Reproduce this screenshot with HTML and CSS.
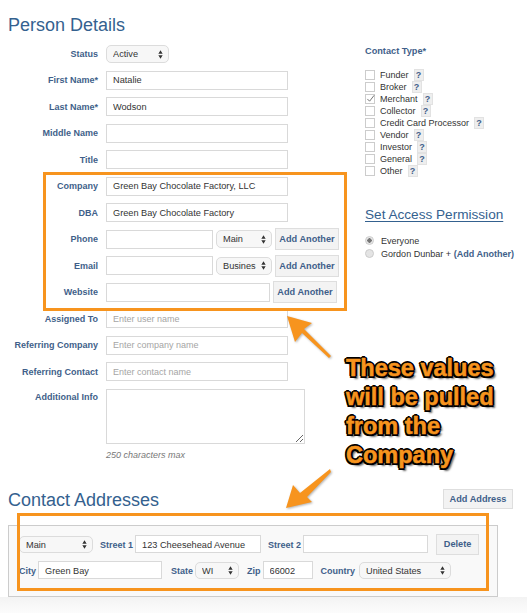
FILE: index.html
```html
<!DOCTYPE html>
<html lang="en">
<head>
<meta charset="utf-8">
<title>Person Details</title>
<link rel="stylesheet" href="styles.css">
</head>
<body>
<div class="page">
  <div class="top">
    <section class="left">
      <h1 class="title">Person Details</h1>
      <div class="row"><label class="lbl">Status</label><div class="sel w-status"><span class="sel-text">Active</span><svg class="updown" viewBox="0 0 6 10"><path d="M3 0l2.6 4H.4zM3 10l2.6-4H.4z"/></svg></div></div>
      <div class="row"><label class="lbl">First Name*</label><input class="inp w-full" value="Natalie"></div>
      <div class="row"><label class="lbl">Last Name*</label><input class="inp w-full" value="Wodson"></div>
      <div class="row"><label class="lbl">Middle Name</label><input class="inp w-full"></div>
      <div class="row"><label class="lbl">Title</label><input class="inp w-full"></div>
      <div class="row"><label class="lbl">Company</label><input class="inp w-full" value="Green Bay Chocolate Factory, LLC"></div>
      <div class="row"><label class="lbl">DBA</label><input class="inp w-full" value="Green Bay Chocolate Factory"></div>
      <div class="row"><label class="lbl">Phone</label><input class="inp w-short"><div class="sel w-type"><span class="sel-text">Main</span><svg class="updown" viewBox="0 0 6 10"><path d="M3 0l2.6 4H.4zM3 10l2.6-4H.4z"/></svg></div><button class="btn btn-add">Add Another</button></div>
      <div class="row"><label class="lbl">Email</label><input class="inp w-short"><div class="sel w-type"><span class="sel-text sel-clip">Busines</span><svg class="updown" viewBox="0 0 6 10"><path d="M3 0l2.6 4H.4zM3 10l2.6-4H.4z"/></svg></div><button class="btn btn-add">Add Another</button></div>
      <div class="row"><label class="lbl">Website</label><input class="inp w-site"><button class="btn btn-add">Add Another</button></div>
      <div class="row"><label class="lbl">Assigned To</label><input class="inp w-full" placeholder="Enter user name"></div>
      <div class="row"><label class="lbl">Referring Company</label><input class="inp w-full" placeholder="Enter company name"></div>
      <div class="row"><label class="lbl">Referring Contact</label><input class="inp w-full" placeholder="Enter contact name"></div>
      <div class="row row-area"><label class="lbl lbl-area">Additional Info</label><textarea class="area"></textarea></div>
      <p class="hint">250 characters max</p>
    </section>
    <aside class="right">
      <div class="ct-title">Contact Type*</div>
      <ul class="ct-list">
        <li class="ct-item"><span class="cb"></span>Funder<span class="help">?</span></li>
        <li class="ct-item"><span class="cb"></span>Broker<span class="help">?</span></li>
        <li class="ct-item"><span class="cb"><svg class="tick" viewBox="0 0 10 10"><path d="M1.5 5.5l2.5 2.5 5-6.5"/></svg></span>Merchant<span class="help">?</span></li>
        <li class="ct-item"><span class="cb"></span>Collector<span class="help">?</span></li>
        <li class="ct-item"><span class="cb"></span>Credit Card Processor<span class="help">?</span></li>
        <li class="ct-item"><span class="cb"></span>Vendor<span class="help">?</span></li>
        <li class="ct-item"><span class="cb"></span>Investor<span class="help">?</span></li>
        <li class="ct-item"><span class="cb"></span>General<span class="help">?</span></li>
        <li class="ct-item"><span class="cb"></span>Other<span class="help">?</span></li>
      </ul>
      <h2 class="access">Set Access Permission</h2>
      <div class="radio-row"><span class="radio on"></span><span>Everyone</span></div>
      <div class="radio-row"><span class="radio"></span><span>Gordon Dunbar + <b class="addlink">(Add Another)</b></span></div>
    </aside>
  </div>

  <section class="addr">
    <div class="addr-head">
      <h1 class="title title-addr">Contact Addresses</h1>
      <button class="btn btn-addr">Add Address</button>
    </div>
    <div class="panel">
      <div class="p-row p-row1">
        <div class="sel w-amain"><span class="sel-text">Main</span><svg class="updown" viewBox="0 0 6 10"><path d="M3 0l2.6 4H.4zM3 10l2.6-4H.4z"/></svg></div>
        <label class="lbl-in l-s1">Street 1</label><input class="inp w-st" value="123 Cheesehead Avenue">
        <label class="lbl-in l-s2">Street 2</label><input class="inp w-st2">
        <button class="btn btn-del">Delete</button>
      </div>
      <div class="p-row">
        <label class="lbl-in">City</label><input class="inp w-city" value="Green Bay">
        <label class="lbl-in l-state">State</label><div class="sel w-state"><span class="sel-text">WI</span><svg class="updown" viewBox="0 0 6 10"><path d="M3 0l2.6 4H.4zM3 10l2.6-4H.4z"/></svg></div>
        <label class="lbl-in l-zip">Zip</label><input class="inp w-zip" value="66002">
        <label class="lbl-in l-country">Country</label><div class="sel w-country"><span class="sel-text">United States</span><svg class="updown" viewBox="0 0 6 10"><path d="M3 0l2.6 4H.4zM3 10l2.6-4H.4z"/></svg></div>
      </div>
    </div>
  </section>
  <div class="foot"></div>

  <div class="mark mark-a"></div>
  <div class="mark mark-b"></div>
  <svg class="arrows" viewBox="0 0 527 613">
    <path d="M287 316L312 323 304 329 331 356 329 358 302 333 295 342Z"/>
    <path d="M286 508L293 485 300 493 330 469 331 472 307 497 312 502Z"/>
  </svg>
  <div class="callout">These values<br>will be pulled<br>from the<br>Company</div>
</div>
</body>
</html>
```
FILE: styles.css
```css
* { box-sizing: border-box; }
html, body { margin: 0; padding: 0; background: #fff; }
body { font-family: "Liberation Sans", Arial, sans-serif; font-size: 9.2px; color: #333; }
.page { position: relative; width: 527px; height: 613px; overflow: hidden; background: #fff; }
.top { display: flex; height: 480px; }
.left { width: 365px; flex: none; }
.right { flex: 1; padding-top: 45px; }

.title { margin: 0; padding: 15px 0 0 8px; height: 44.5px; font-size: 18px; line-height: 21px; font-weight: 400; color: #34618f; }

.row { display: flex; align-items: center; height: 19px; margin-bottom: 7.47px; }
.row-area { height: 55px; align-items: flex-start; margin-bottom: 0; }
.lbl { width: 98px; margin-right: 8px; flex: none; text-align: right; font-weight: 700; font-size: 9px; color: #3f5f8a; }
.lbl-area { padding-top: 3px; }
.inp { height: 19px; border: 1px solid #d9d9d9; background: #fff; padding: 0 6px; font: 9.2px "Liberation Sans", Arial, sans-serif; color: #333; outline: 0; border-radius: 0; }
.inp::placeholder { color: #a5a5a5; opacity: 1; font-size: 9px; }
.w-full { width: 182px; }
.w-short { width: 107px; }
.w-site { width: 164px; }
.area { width: 199px; height: 55px; border: 1px solid #d9d9d9; display: block; margin: 0; padding: 0; outline: 0; background: #fff; }
.hint { margin: 5px 0 0 106px; font-size: 9px; line-height: 12px; font-style: italic; color: #777; }

.sel { display: flex; align-items: center; justify-content: space-between; height: 18px; border: 1px solid #dcdcdc; border-radius: 5px; background: #f7f7f7; padding: 0 5px 0 6px; color: #333; font-size: 9.2px; overflow: hidden; flex: none; }
.sel-text { overflow: hidden; white-space: nowrap; flex: 1; }
.sel-clip { text-overflow: clip; }
.updown { width: 5px; height: 9px; flex: none; margin-left: 2px; fill: #333; }
.w-status { width: 63px; }
.w-type { width: 56px; margin: 0 3px; }
.w-amain { width: 74px; }
.w-state { width: 44px; }
.w-country { width: 92px; }

.btn { border: 1px solid #dedede; background: #f3f3f3; color: #3f5f8a; font: 700 9.2px "Liberation Sans", Arial, sans-serif; padding: 0; border-radius: 0; flex: none; }
.btn-add { width: 64px; height: 22px; }
.w-site + .btn-add { margin-left: 3px; }

.ct-title { padding-top: 1px; font-weight: 700; font-size: 9.2px; line-height: 11px; color: #3f5f8a; }
.ct-list { list-style: none; margin: 12px 0 0; padding: 0; }
.ct-item { display: flex; align-items: center; height: 12px; font-size: 9px; color: #333; }
.cb { width: 10px; height: 10px; border: 1px solid #ccc; background: #fff; margin-right: 5px; flex: none; display: block; }
.tick { display: block; width: 9px; height: 9px; margin: -1px 0 0 0; fill: none; stroke: #666; stroke-width: 1; }
.help { width: 10px; height: 12px; margin-left: 5px; background: #eee; border: 1px solid #e2e2e2; color: #3f5f8a; font-weight: 700; font-size: 9px; line-height: 10px; text-align: center; flex: none; }
.access { margin: 30px 0 0; font-size: 13.6px; line-height: 16px; font-weight: 400; color: #34618f; text-decoration: underline; text-underline-offset: 2px; text-decoration-thickness: 1px; white-space: nowrap; }
.radio-row { display: flex; align-items: center; height: 13px; font-size: 9.05px; color: #333; white-space: nowrap; }
.access + .radio-row { margin-top: 11px; }
.radio { width: 9px; height: 9px; border-radius: 50%; background: #e4e4e4; border: 1px solid #ccc; margin-right: 7px; flex: none; }
.radio.on { background: radial-gradient(circle, #777 0 2px, #e8e8e8 2.4px); }
.addlink { color: #3f5f8a; }

.addr { margin-top: 9px; }
.addr-head { display: flex; justify-content: space-between; height: 36px; padding-right: 14px; }
.title-addr { padding-top: 1px; height: auto; }
.btn-addr { width: 70px; height: 20px; }
.panel { margin-left: 8px; width: 490px; height: 72px; background: #f9f9f9; border: 1px solid #ccc; padding-top: 9px; }
.p-row { display: flex; align-items: center; height: 18px; padding-left: 10px; }
.p-row .inp { height: 18px; padding-top: 1px; }
.p-row .sel { height: 17px; margin-top: 1px; }
.p-row1 { margin-bottom: 8px; }
.lbl-in { font-weight: 700; font-size: 9px; padding-top: 1px; color: #3f5f8a; white-space: nowrap; margin-right: 2px; }
.l-s1 { margin-left: 7px; }
.l-s2 { margin-left: 7px; }
.l-state { margin-left: 9px; }
.l-zip { margin-left: 8px; }
.l-country { margin-left: 8px; margin-right: 4px; }
.w-st { width: 126px; }
.w-st2 { width: 125px; }
.btn-del { width: 43px; height: 21px; margin-left: 8px; }
.w-city { width: 124px; }
.w-zip { width: 50px; }
.foot { height: 16px; background: linear-gradient(#f3f3f3, #fcfcfc); }

.mark { position: absolute; border: 3px solid #f7941e; }
.mark-a { left: 43px; top: 172px; width: 304px; height: 139px; }
.mark-b { left: 17px; top: 513px; width: 472px; height: 78px; }
.arrows { position: absolute; left: 0; top: 0; width: 527px; height: 613px; fill: #f7941e; pointer-events: none; filter: drop-shadow(1px 1px 1px rgba(0,0,0,.3)); }
.callout { position: absolute; left: 346px; top: 354px; font-size: 23.5px; line-height: 29px; font-weight: 700; color: #f7941e; white-space: nowrap; -webkit-text-stroke: .5px #f7941e;
  text-shadow: -2px 0 0 #000, 2px 0 0 #000, 0 -2px 0 #000, 0 2px 0 #000, -1.5px -1.5px 0 #000, 1.5px -1.5px 0 #000, -1.5px 1.5px 0 #000, 1.5px 1.5px 0 #000, 3px 3px 2px rgba(0,0,0,.6); }
```
